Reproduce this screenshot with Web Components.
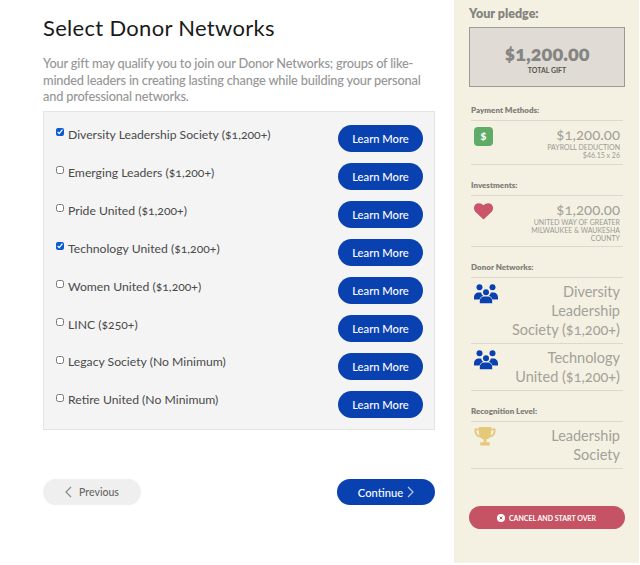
<!DOCTYPE html>
<html><head><meta charset="utf-8"><style>
html,body{margin:0;padding:0;background:#fff}
body{font-family:Lato,"Open Sans",sans-serif;width:640px;height:565px;overflow:hidden}
</style></head><body>
<donor-page>
  <network-panel></network-panel>
  <pledge-sidebar></pledge-sidebar>
</donor-page>
<script>
const FF='Lato,"Open Sans",sans-serif';
function el(name,css,html){customElements.define(name,class extends HTMLElement{constructor(){super();this.attachShadow({mode:'open'}).innerHTML=`<style>${css}</style>${html(this)}`;}});}
const ICONS={
 people:`<svg width="24" height="20" viewBox="0 0 24 20" fill="#0a41b0" style="display:block;margin-top:1px"><circle cx="5.500" cy="3.200" r="3"/><circle cx="18.500" cy="3.200" r="3"/><circle cx="12" cy="8.200" r="3"/><path d="M0 13.500c0-3 2-5 5-5h2.200c.3 1.500 1 2.500 1.800 3.200-1.800.7-3 2-3.400 3.800H0zM24 13.500c0-3-2-5-5-5h-2.200c-.3 1.500-1 2.500-1.800 3.200 1.800.7 3 2 3.400 3.800H24zM5.800 19.200v-2.200c0-3 2-4.500 4.200-4.500h4c2.200 0 4.200 1.500 4.200 4.500v2.200z"/></svg>`,
 heart:`<svg width="19" height="17" viewBox="0 0 19 17" fill="#c95567" style="display:block;margin-top:1px"><path d="M9.500 16.500 1.500 9C-.5 7-.5 3.500 1.200 1.700 3.200-.4 7-.4 9.500 2.300 12-.4 15.800-.4 17.800 1.700 19.500 3.500 19.500 7 17.500 9z"/></svg>`,
 trophy:`<svg width="22" height="19" viewBox="0 0 22 20" fill="#e6c978" style="display:block"><path d="M4.500 0h13v1.500H22v3c0 3.500-2.500 6-6.200 6.500-.8 1-1.800 1.700-3.300 2v3h3.500V19.500h-10V16h3.500v-3c-1.500-.3-2.500-1-3.300-2C2.500 10.500 0 8 0 4.500v-3h4.500zM2 3.500v1.200c0 2 1.200 3.500 3.300 4.100-.5-1.500-.8-3.300-.8-5.300zm18 0h-2.500c0 2-.3 3.800-.8 5.300 2.100-.6 3.300-2.100 3.300-4.100z"/></svg>`,
 dollar:`<svg width="19" height="19" viewBox="0 0 19 19" style="display:block"><rect width="19" height="19" rx="4" fill="#5fab68"/><text x="9.500" y="13.200" text-anchor="middle" font-family="Lato,sans-serif" font-weight="900" font-size="10" fill="#fff">$</text></svg>`
};
el('donor-page',`:host{display:flex;width:640px;height:565px;box-sizing:border-box;padding-left:43px;padding-right:1px;align-items:flex-start}`,()=>`<slot></slot>`);
el('network-row',`:host{display:flex;height:38px;justify-content:space-between;padding:0 11px 0 12px;box-sizing:border-box}
label{display:flex;align-items:flex-start;color:#4a4a4a;font-size:12.200px;font-variant-numeric:oldstyle-nums;padding-top:2px;line-height:16px;height:20px}
input{width:8px;height:8px;margin:1px 4px 0 0;accent-color:#0a5ad2;flex:none}
:host([up]) label{padding-top:1px}
:host([up]) input{margin-top:2px}
`,h=>`<label><input type="checkbox" ${h.hasAttribute('checked')?'checked':''}><slot></slot></label><pill-button>Learn More</pill-button>`);
el('pill-button',`:host{display:inline-flex;align-items:center;justify-content:center;gap:4px;border-radius:14px;font-size:11.200px;font-weight:500;height:27px;width:85px;box-sizing:border-box;padding-top:1px;background:#0a41b0;color:#fff;flex:none}
:host([variant=ghost]){background:#efefef;color:#666;width:98px;height:26px;gap:7px;font-size:10.500px}
:host([variant=wide]){width:98px;height:26px}
svg{display:block}`,()=>`<slot></slot>`);
el('network-panel',`:host{display:block;width:392px;margin-right:19px;color:#222}
h1{margin:16px 0 0;font:400 22px/24px ${FF};letter-spacing:.3px;color:#1a1a1a}
p{margin:15px 0 6px;font:500 12.800px/16.500px ${FF};letter-spacing:-.2px;color:#969696}
.box{background:#f4f4f4;border:1px solid #e4e4e4;height:319px;box-sizing:border-box;padding-top:13px}
nav{display:flex;justify-content:space-between;margin-top:49px}
`,()=>`<h1>Select Donor Networks</h1>
<p>Your gift may qualify you to join our Donor Networks; groups of like-minded leaders in creating lasting change while building your personal and professional networks.</p>
<div class="box">
<network-row checked>Diversity Leadership Society ($1,200+)</network-row>
<network-row>Emerging Leaders ($1,200+)</network-row>
<network-row>Pride United ($1,200+)</network-row>
<network-row checked>Technology United ($1,200+)</network-row>
<network-row>Women United ($1,200+)</network-row>
<network-row>LINC ($250+)</network-row>
<network-row up>Legacy Society (No Minimum)</network-row>
<network-row up>Retire United (No Minimum)</network-row>
</div>
<nav><pill-button variant="ghost"><svg width="7" height="12" viewBox="0 0 7 12" fill="none" stroke="#888" stroke-width="1.200"><path d="M6 1 1 6l5 5"/></svg>Previous</pill-button>
<pill-button variant="wide">Continue<svg width="7" height="12" viewBox="0 0 7 12" fill="none" stroke="#b9cbee" stroke-width="1.200"><path d="m1 1 5 5-5 5"/></svg></pill-button></nav>`);
el('pledge-section',`:host{display:block;margin-bottom:15px}
h3{margin:0 0 0 2px;padding-bottom:4px;border-bottom:1px solid #dcd9cc;font:800 8px/11px ${FF};color:#807f79;width:152px;box-sizing:border-box}
`,h=>`<h3>${h.getAttribute('title')}</h3><slot></slot>`);
el('pledge-item',`:host{display:flex;justify-content:space-between;margin-left:2px;width:152px;box-sizing:border-box;padding:5px 3px;border-bottom:1px solid #dcd9cc}
:host([tight]){padding:4px 3px}
:host([short]){padding-bottom:4px}
.i{flex:none;margin-top:1px}
.t{text-align:right;color:#a3a198}
::slotted(.big){display:block;font-size:14.500px;line-height:19px;font-variant-numeric:oldstyle-nums;color:#a3a198}
::slotted(.num){display:block;font-size:15px;line-height:17px;font-variant-numeric:oldstyle-nums;color:#a3a198}
::slotted(.sm){display:block;font-size:7px;line-height:8px;color:#9c9a92}`,h=>`<div class="i">${ICONS[h.getAttribute('icon')]}</div><div class="t" style="max-width:${h.getAttribute('tw')||'118'}px"><slot></slot></div>`);
el('pledge-sidebar',`:host{display:block;width:185px;height:563px;background:#f4f1e3;box-sizing:border-box;padding:6px 14px 0 15px;flex:none}
h2{margin:0;font:800 12.500px/15px ${FF};color:#85847e}
.total{margin-top:6px;height:60px;background:#e0dcd5;border:1px solid #9c9a96;box-sizing:border-box;display:flex;flex-direction:column;align-items:center;padding-top:13px;margin-bottom:18px;width:156px}
.amt{font:800 20px/24px ${FF};color:#858583;font-variant-numeric:oldstyle-nums}
.lab{font:700 7px/10px ${FF};color:#55554f}
button{all:unset;display:flex;align-items:center;justify-content:center;gap:4px;width:156px;height:23px;background:#c65364;border-radius:12px;color:#fff;font:700 7px ${FF};margin-top:37px;box-sizing:border-box;padding-right:1px}
`,()=>`<h2>Your pledge:</h2>
<div class="total"><span class="amt">$1,200.00</span><span class="lab">TOTAL GIFT</span></div>
<pledge-section title="Payment Methods:"><pledge-item icon="dollar"><span class="num">$1,200.00</span><span class="sm">PAYROLL DEDUCTION</span><span class="sm">$46.15 x 26</span></pledge-item></pledge-section>
<pledge-section title="Investments:"><pledge-item icon="heart" tw="105" short><span class="num">$1,200.00</span><span class="sm">UNITED WAY OF GREATER MILWAUKEE &amp; WAUKESHA COUNTY</span></pledge-item></pledge-section>
<pledge-section title="Donor Networks:"><pledge-item icon="people" tight><span class="big">Diversity Leadership Society ($1,200+)</span></pledge-item><pledge-item icon="people" tw="110" tight><span class="big">Technology United ($1,200+)</span></pledge-item></pledge-section>
<pledge-section title="Recognition Level:"><pledge-item icon="trophy" tw="80" tight><span class="big">Leadership Society</span></pledge-item></pledge-section>
<button><svg width="8" height="8" viewBox="0 0 8 8"><circle cx="4" cy="4" r="4" fill="#fff"/><path d="m2.700 2.700 2.600 2.600m0-2.600L2.700 5.300" stroke="#c65364" stroke-width="1"/></svg>CANCEL AND START OVER</button>`);
</script>
</body></html>
